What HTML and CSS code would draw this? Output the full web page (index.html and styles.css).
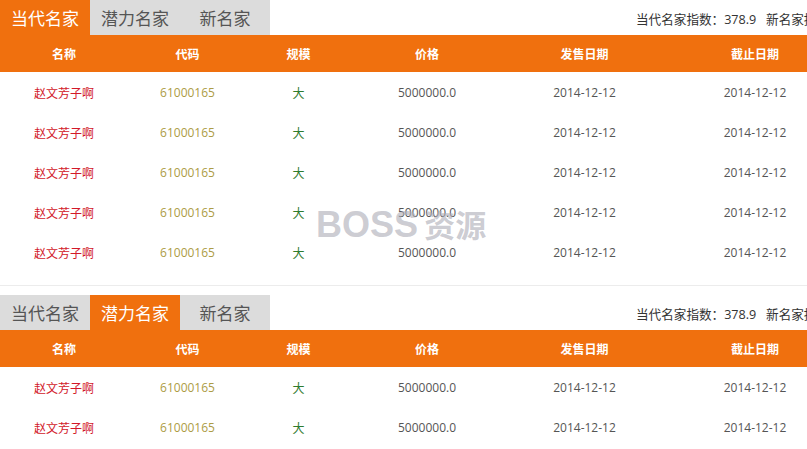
FILE: index.html
```html
<!DOCTYPE html>
<html lang="zh-CN">
<head>
<meta charset="utf-8">
<title>名家</title>
<link rel="stylesheet" href="styles.css">
</head>
<body>
<div class="page">
  <section class="block first">
    <div class="tabbar">
      <div class="tab active">当代名家</div>
      <div class="tab">潜力名家</div>
      <div class="tab">新名家</div>
      <div class="index">当代名家指数<span class="colon">：</span>378.9&nbsp;&nbsp;&nbsp;新名家指数<span class="colon">：</span>378.9</div>
    </div>
    <div class="table">
      <div class="row head"><span>名称</span><span>代码</span><span>规模</span><span>价格</span><span>发售日期</span><span>截止日期</span></div>
      <div class="row"><span class="name">赵文芳子啊</span><span class="code">61000165</span><span class="size">大</span><span class="num">5000000.0</span><span class="num">2014-12-12</span><span class="num">2014-12-12</span></div>
      <div class="row"><span class="name">赵文芳子啊</span><span class="code">61000165</span><span class="size">大</span><span class="num">5000000.0</span><span class="num">2014-12-12</span><span class="num">2014-12-12</span></div>
      <div class="row"><span class="name">赵文芳子啊</span><span class="code">61000165</span><span class="size">大</span><span class="num">5000000.0</span><span class="num">2014-12-12</span><span class="num">2014-12-12</span></div>
      <div class="row"><span class="name">赵文芳子啊</span><span class="code">61000165</span><span class="size">大</span><span class="num">5000000.0</span><span class="num">2014-12-12</span><span class="num">2014-12-12</span></div>
      <div class="row"><span class="name">赵文芳子啊</span><span class="code">61000165</span><span class="size">大</span><span class="num">5000000.0</span><span class="num">2014-12-12</span><span class="num">2014-12-12</span></div>
    </div>
  </section>
  <section class="block">
    <div class="tabbar">
      <div class="tab">当代名家</div>
      <div class="tab active">潜力名家</div>
      <div class="tab">新名家</div>
      <div class="index">当代名家指数<span class="colon">：</span>378.9&nbsp;&nbsp;&nbsp;新名家指数<span class="colon">：</span>378.9</div>
    </div>
    <div class="table">
      <div class="row head"><span>名称</span><span>代码</span><span>规模</span><span>价格</span><span>发售日期</span><span>截止日期</span></div>
      <div class="row"><span class="name">赵文芳子啊</span><span class="code">61000165</span><span class="size">大</span><span class="num">5000000.0</span><span class="num">2014-12-12</span><span class="num">2014-12-12</span></div>
      <div class="row"><span class="name">赵文芳子啊</span><span class="code">61000165</span><span class="size">大</span><span class="num">5000000.0</span><span class="num">2014-12-12</span><span class="num">2014-12-12</span></div>
    </div>
  </section>
</div>
<div class="watermark"><span class="wm-en">BOSS</span> <span class="wm-cn">资源</span></div>
</body>
</html>
```

FILE: styles.css
```css
html, body {
  margin: 0;
  padding: 0;
  background: #fff;
  overflow: hidden;
}
body {
  font-family: "Open Sans", "Noto Sans CJK SC", sans-serif;
  font-size: 12px;
  color: #555;
  position: relative;
  height: 449px;
}
.page {
  width: 845px;
}
.block.first {
  padding-bottom: 13px;
  border-bottom: 1px solid #ececec;
  margin-bottom: 9px;
}
.tabbar {
  display: flex;
  align-items: center;
  height: 35px;
  white-space: nowrap;
}
.tab {
  flex: 0 0 90px;
  width: 90px;
  height: 35px;
  line-height: 35px;
  text-align: center;
  background: #dcdcdc;
  color: #555;
  font-family: "Noto Sans CJK SC", sans-serif;
  font-size: 17px;
}
.tab.active {
  background: #f0700e;
  color: #fff;
}
.index {
  flex: 0 0 auto;
  margin-left: 366px;
  font-family: "Open Sans", "Noto Sans CJK SC", sans-serif;
  font-size: 12.6px;
  color: #333;
  padding-top: 1px;
}
.colon {
  font-family: "Noto Sans CJK TC", "Noto Sans CJK SC", sans-serif;
}
.row {
  display: grid;
  grid-template-columns: 128px 119px 103px 154px 161px 180px;
  height: 40px;
  align-items: center;
  text-align: center;
}
.row.head {
  height: 37px;
  background: #f0700e;
  color: #fff;
  font-family: "Noto Sans CJK SC", sans-serif;
  font-weight: bold;
}
.name {
  color: #d2192a;
  font-family: "Noto Sans CJK SC", sans-serif;
}
.code {
  color: #ad9c45;
}
.size {
  color: #2e7a2e;
  font-family: "Noto Sans CJK SC", sans-serif;
}
.num {
  color: #555;
}
.watermark {
  position: absolute;
  left: 316px;
  top: 206px;
  line-height: 36px;
  white-space: nowrap;
  color: rgba(175, 175, 185, 0.65);
  font-weight: bold;
  pointer-events: none;
}
.wm-en {
  font-family: "Liberation Sans", sans-serif;
  font-size: 36px;
}
.wm-cn {
  font-family: "Noto Sans CJK SC", sans-serif;
  font-size: 31px;
  margin-left: 3px;
}
```
